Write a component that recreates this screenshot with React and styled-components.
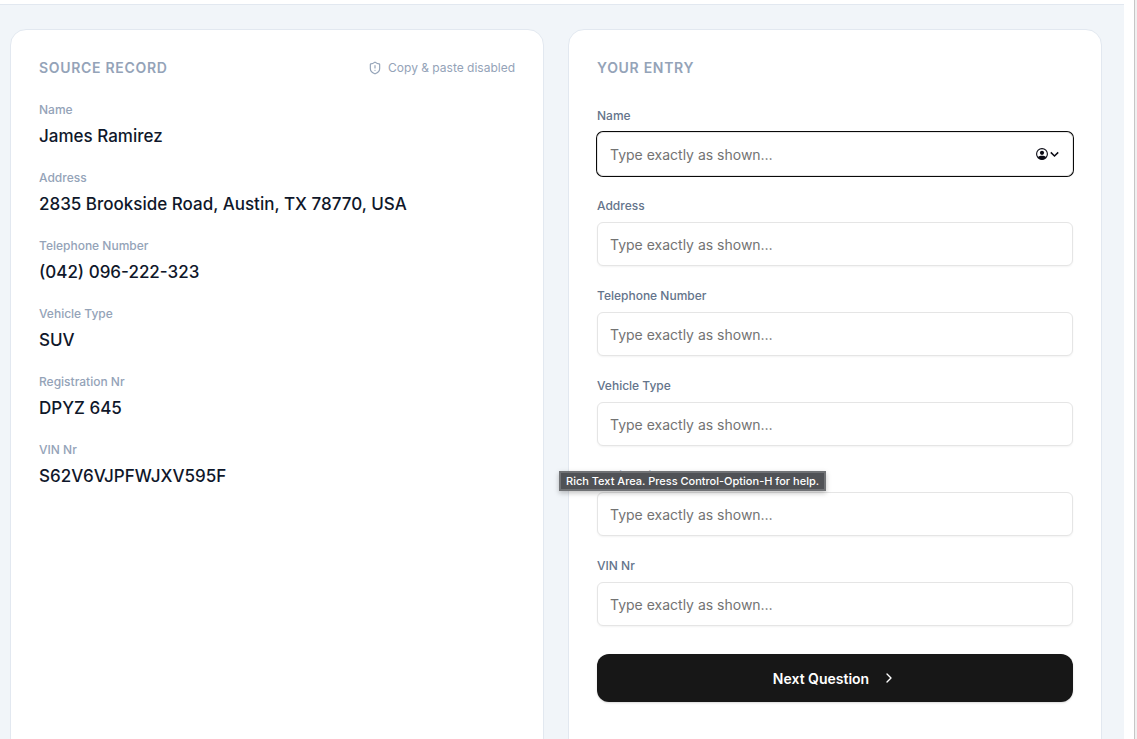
import { useState } from "react";
import styled, { createGlobalStyle } from "styled-components";
import { ChevronRight } from "lucide-react";

const GlobalStyle = createGlobalStyle`
  *,
  *::before,
  *::after {
    box-sizing: border-box;
  }

  body {
    margin: 0;
    font-family: Inter, "Liberation Sans", sans-serif;
    -webkit-font-smoothing: antialiased;
    color: #0f172a;
    background-color: #ffffff;
  }
`;

const Shell = styled.div`
  display: flex;
  height: 100vh;
  overflow: hidden;
`;

const Content = styled.div`
  flex: 1;
  min-width: 0;
`;

const TopBar = styled.header`
  height: 5px;
  border-bottom: 1px solid #e2e8f0;
  background-color: #ffffff;
`;

const Gutter = styled.div`
  width: 13px;
  padding-left: 10px;
`;

const GutterEdge = styled.div`
  height: 100%;
  border-left: 1px solid #c6c6c6;
  background-color: #f0f0f0;
`;

const Main = styled.main`
  display: grid;
  grid-template-columns: 1fr 1fr;
  gap: 24px;
  padding: 24px 22px 24px 10px;
  background-color: #f1f5f9;
`;

const Card = styled.section`
  min-width: 0;
  min-height: 100vh;
  padding: 28px;
  border: 1px solid #e2e8f0;
  border-radius: 16px;
  background-color: #ffffff;
`;

const CardHeader = styled.div`
  display: flex;
  justify-content: space-between;
  align-items: center;
  height: 20px;
`;

const CardTitle = styled.h2`
  margin: 0;
  font-size: 14px;
  line-height: 20px;
  font-weight: 600;
  letter-spacing: 0.05em;
  text-transform: uppercase;
  color: #94a3b8;
`;

const Notice = styled.span`
  display: flex;
  align-items: center;
  gap: 6px;
  font-size: 12px;
  line-height: 16px;
  color: #94a3b8;
`;

const RecordList = styled.dl`
  display: flex;
  flex-direction: column;
  gap: 20px;
  margin: 24px 0 0;
`;

const RecordItem = styled.div`
  display: flex;
  flex-direction: column;
  gap: 4px;
`;

const RecordLabel = styled.dt`
  font-size: 12px;
  line-height: 16px;
  font-weight: 500;
  color: #94a3b8;
`;

const RecordValue = styled.dd`
  margin: 0;
  font-size: 17px;
  line-height: 28px;
  font-weight: 500;
  user-select: none;
`;

const EntryForm = styled.form`
  display: flex;
  flex-direction: column;
  gap: 28px;
  margin-top: 28px;
`;

const Fields = styled.div`
  display: flex;
  flex-direction: column;
  gap: 20px;
`;

const Field = styled.div`
  position: relative;
  display: flex;
  flex-direction: column;
  gap: 6px;
`;

const FieldLabel = styled.label`
  font-size: 12px;
  line-height: 20px;
  font-weight: 500;
  color: #64748b;
`;

const InputBox = styled.div`
  display: flex;
  align-items: center;
  height: 44px;
  padding: 0 12px;
  border: 1px solid #e5e5e5;
  border-radius: 6px;
  background-color: #ffffff;
  box-shadow: ${({ $active }) =>
    $active ? "0 0 0 1px #0a0a0a" : "0 1px 2px rgba(0, 0, 0, 0.05)"};
`;

const TextInput = styled.input`
  flex: 1;
  min-width: 0;
  height: 100%;
  padding: 0;
  border: none;
  outline: none;
  background: transparent;
  font-family: inherit;
  font-size: 14px;
  color: #0f172a;

  &::placeholder {
    color: #737373;
    opacity: 1;
  }
`;

const AutofillButton = styled.button`
  display: flex;
  align-items: center;
  padding: 0;
  border: none;
  background: none;
  color: #0a0a14;
  cursor: pointer;
`;

const Tooltip = styled.div`
  position: absolute;
  top: 5px;
  left: -38px;
  z-index: 1;
  padding: 0 5px;
  border: 2px solid #707275;
  background-color: #505256;
  box-shadow: 0 2px 5px rgba(0, 0, 0, 0.25);
  font-size: 11px;
  line-height: 16px;
  font-weight: 500;
  white-space: nowrap;
  color: #ffffff;
`;

const SubmitButton = styled.button`
  display: flex;
  justify-content: center;
  align-items: center;
  gap: 12px;
  height: 48px;
  border: none;
  border-radius: 12px;
  background-color: #171717;
  box-shadow: 0 1px 2px rgba(0, 0, 0, 0.15);
  font-family: inherit;
  font-size: 14px;
  font-weight: 600;
  color: #ffffff;
  cursor: pointer;

  &:hover {
    background-color: #262626;
  }
`;

const record = [
  { key: "name", label: "Name", value: "James Ramirez" },
  {
    key: "address",
    label: "Address",
    value: "2835 Brookside Road, Austin, TX 78770, USA",
  },
  { key: "phone", label: "Telephone Number", value: "(042) 096-222-323" },
  { key: "vehicle", label: "Vehicle Type", value: "SUV" },
  { key: "registration", label: "Registration Nr", value: "DPYZ 645" },
  { key: "vin", label: "VIN Nr", value: "S62V6VJPFWJXV595F" },
];

function ShieldIcon() {
  return (
    <svg
      width="14"
      height="14"
      viewBox="0 0 24 24"
      fill="none"
      stroke="currentColor"
      strokeWidth="2"
      strokeLinecap="round"
      strokeLinejoin="round"
      aria-hidden="true"
    >
      <path d="M20 13c0 5-3.5 7.5-7.66 8.95a1 1 0 0 1-.67-.01C7.5 20.5 4 18 4 13V6a1 1 0 0 1 1-1c2 0 4.5-1.2 6.24-2.72a1.17 1.17 0 0 1 1.52 0C14.51 3.81 17 5 19 5a1 1 0 0 1 1 1z" />
      <path d="M12 8v4" />
      <path d="M12 16h.01" />
    </svg>
  );
}

function AutofillIcon() {
  return (
    <svg width="24" height="12" viewBox="0 0 24 12" aria-hidden="true">
      <circle
        cx="6"
        cy="6"
        r="5.4"
        fill="none"
        stroke="currentColor"
        strokeWidth="1.1"
      />
      <circle cx="6" cy="4.8" r="2.1" fill="currentColor" />
      <path
        d="M1.7 9.2C2.9 8.2 4.4 7.8 6 7.8s3.1 .4 4.3 1.4C9.3 10.7 7.7 11.5 6 11.5S2.7 10.7 1.7 9.2z"
        fill="currentColor"
      />
      <path
        d="M14.8 4.4l3.7 3.6 3.7-3.6"
        fill="none"
        stroke="currentColor"
        strokeWidth="1.5"
      />
    </svg>
  );
}

function SourceRecord() {
  return (
    <Card>
      <CardHeader>
        <CardTitle>Source Record</CardTitle>
        <Notice>
          <ShieldIcon />
          Copy &amp; paste disabled
        </Notice>
      </CardHeader>
      <RecordList>
        {record.map((item) => (
          <RecordItem key={item.key}>
            <RecordLabel>{item.label}</RecordLabel>
            <RecordValue>{item.value}</RecordValue>
          </RecordItem>
        ))}
      </RecordList>
    </Card>
  );
}

function EntryField({ item, active, hint, value, onChange }) {
  return (
    <Field>
      <FieldLabel htmlFor={item.key}>{item.label}</FieldLabel>
      <InputBox $active={active}>
        <TextInput
          id={item.key}
          type="text"
          autoComplete="off"
          placeholder="Type exactly as shown…"
          value={value}
          onChange={(e) => onChange(item.key, e.target.value)}
          onPaste={(e) => e.preventDefault()}
        />
        {active && (
          <AutofillButton type="button" aria-label="Autofill contact">
            <AutofillIcon />
          </AutofillButton>
        )}
      </InputBox>
      {hint && <Tooltip role="tooltip">{hint}</Tooltip>}
    </Field>
  );
}

function YourEntry() {
  const [entry, setEntry] = useState({});

  function handleChange(key, value) {
    setEntry({ ...entry, [key]: value });
  }

  return (
    <Card>
      <CardHeader>
        <CardTitle>Your Entry</CardTitle>
      </CardHeader>
      <EntryForm onSubmit={(e) => e.preventDefault()}>
        <Fields>
          {record.map((item) => (
            <EntryField
              key={item.key}
              item={item}
              active={item.key === "name"}
              hint={
                item.key === "registration" &&
                "Rich Text Area. Press Control-Option-H for help."
              }
              value={entry[item.key] || ""}
              onChange={handleChange}
            />
          ))}
        </Fields>
        <SubmitButton type="submit">
          Next Question
          <ChevronRight size={16} />
        </SubmitButton>
      </EntryForm>
    </Card>
  );
}

function App() {
  return (
    <>
      <GlobalStyle />
      <Shell>
        <Content>
          <TopBar />
          <Main>
            <SourceRecord />
            <YourEntry />
          </Main>
        </Content>
        <Gutter>
          <GutterEdge />
        </Gutter>
      </Shell>
    </>
  );
}

export default App;
